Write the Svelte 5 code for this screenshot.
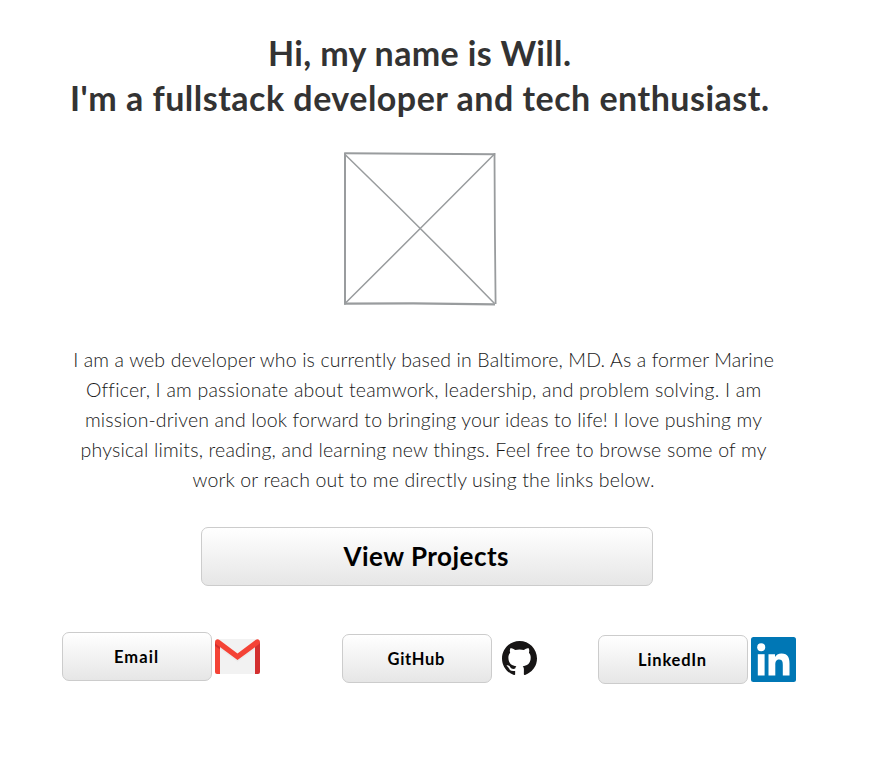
<script>
  const headline = [
    { text: 'Hi, my name is Will.', width: 303 },
    { text: "I'm a fullstack developer and tech enthusiast.", width: 699 }
  ];

  const bio = [
    { text: 'I am a web developer who is currently based in Baltimore, MD. As a former Marine', width: 701 },
    { text: 'Officer, I am passionate about teamwork, leadership, and problem solving. I am', width: 674 },
    { text: 'mission-driven and look forward to bringing your ideas to life! I love pushing my', width: 677 },
    { text: 'physical limits, reading, and learning new things. Feel free to browse some of my', width: 686 },
    { text: 'work or reach out to me directly using the links below.', width: 462 }
  ];

  // Tracks a line out or in so that it fills its measure.
  function fit(node, width) {
    node.style.letterSpacing = '0px';
    const natural = node.getBoundingClientRect().width;
    const gaps = node.textContent.length - 1;
    const spacing = (width - natural) / gaps;
    node.style.letterSpacing = `${spacing}px`;
    node.style.marginRight = `${-spacing}px`;
  }
</script>

<main>
  <h1>
    {#each headline as line}
      <span class="line"><span class="text" use:fit={line.width}>{line.text}</span></span>
    {/each}
  </h1>

  <svg class="portrait" width="154" height="154" viewBox="0 0 154 154" fill="none" stroke="#999c9e">
    <path d="M1.200 1.200 76 1.700 152.200 2.200" stroke-width="2" />
    <path d="M2 1V152.500" stroke-width="2" />
    <path d="M151.500 1 151.900 80 152.600 152" stroke-width="1.800" />
    <path d="M1 151.700 70 151.400 152 152.300" stroke-width="2.200" />
    <path d="M2 2.500Q79 77 151.500 151.500" stroke-width="1.500" />
    <path d="M151 2.500Q76 78 2.500 151" stroke-width="1.500" />
  </svg>

  <p class="bio">
    {#each bio as line}
      <span class="line"><span class="text" use:fit={line.width}>{line.text}</span></span>
    {/each}
  </p>

  <button class="projects"><span class="text" use:fit={165}>View Projects</span></button>

  <nav>
    <div class="link email">
      <button><span class="text" use:fit={44}>Email</span></button>
      <svg width="45" height="35" viewBox="0 0 45 35">
        <path fill="#f2f2f2" d="M2 0h41v35H2z" />
        <path fill="#dcdcdc" d="M5 8 22.500 21 40 8v2L22.500 23 5 10z" opacity=".3" />
        <path fill="#d32f2f" d="M40 5l5-2v30q0 2-2 2h-3z" />
        <path fill="#f44336" d="M0 3h5v32H2q-2 0-2-2z" />
        <path fill="#d32f2f" d="M0 3 5 7v3.500L0 7z" />
        <path fill="#f44336" d="M0 3.200C0 .5 2.400-.6 4.500.9L22.500 14.500 40.500.9C42.600-.6 45 .5 45 3.200Q45 4.500 43.500 5.600L22.500 21 1.500 5.600Q0 4.500 0 3.200z" />
      </svg>
    </div>
    <div class="link github">
      <button><span class="text" use:fit={57}>GitHub</span></button>
      <svg width="35" height="34" viewBox="0 0 16 15.600" preserveAspectRatio="none">
        <path fill="#171515" d="M8 0C3.580 0 0 3.580 0 8c0 3.540 2.290 6.530 5.470 7.590.4.070.55-.17.55-.38 0-.19-.01-.82-.01-1.490-2.010.37-2.530-.49-2.690-.94-.09-.23-.48-.94-.82-1.130-.28-.15-.68-.52-.01-.53.63-.01 1.080.58 1.230.82.72 1.210 1.870.87 2.330.66.07-.52.28-.87.51-1.070-1.780-.2-3.640-.89-3.640-3.950 0-.87.31-1.590.82-2.150-.08-.2-.36-1.020.08-2.120 0 0 .67-.21 2.200.82.64-.18 1.320-.27 2-.27s1.360.09 2 .27c1.530-1.040 2.200-.82 2.200-.82.44 1.100.16 1.920.08 2.120.51.56.82 1.270.82 2.150 0 3.070-1.870 3.750-3.650 3.950.29.25.54.73.54 1.480 0 1.070-.01 1.930-.01 2.200 0 .21.15.46.55.38A8.010 8.010 0 0 0 16 8c0-4.420-3.580-8-8-8z" />
      </svg>
    </div>
    <div class="link linkedin">
      <button><span class="text" use:fit={68}>LinkedIn</span></button>
      <svg width="45" height="45" viewBox="0 0 45 45">
        <rect width="45" height="45" rx="2.500" fill="#0077b5" />
        <g fill="#fff">
          <circle cx="10.200" cy="10.300" r="4" />
          <path d="M6.800 17.200h6.800V38.500H6.800z" />
          <path d="M17.500 17.200H24v2.900c1-1.800 3.300-3.500 6.500-3.500 6.700 0 8 4.400 8 10.200v11.700h-6.700V28.100c0-2.500 0-5.700-3.500-5.700s-4 2.700-4 5.500v10.600h-6.800z" />
        </g>
      </svg>
    </div>
  </nav>
</main>

<style>
  :global(body) {
    background: #fff;
  }

  main {
    box-sizing: border-box;
    width: 878px;
    height: 768px;
    padding-top: 30px;
    display: flex;
    flex-direction: column;
    align-items: flex-start;
    font-family: Lato, 'Liberation Sans', sans-serif;
    overflow: hidden;
  }

  .line {
    display: flex;
    justify-content: center;
  }

  .text {
    display: inline-block;
    white-space: nowrap;
  }

  h1 {
    margin: 0;
    width: 839px;
    font-size: 34px;
    font-weight: 700;
    line-height: 45px;
    color: #333;
  }

  .portrait {
    margin: 32px 0 0 343px;
    flex: none;
  }

  .bio {
    margin: 39px 0 0;
    width: 847px;
    font-size: 19.500px;
    font-weight: 300;
    line-height: 30px;
    color: #181818;
  }

  button {
    box-sizing: border-box;
    display: flex;
    align-items: center;
    justify-content: center;
    width: 150px;
    height: 49px;
    padding: 0 2px 0 0;
    border: 1px solid #ccc;
    border-radius: 7px;
    background: linear-gradient(#fff, #e6e6e6);
    color: #000;
    font: 700 16.500px/20px Lato, 'Liberation Sans', sans-serif;
  }

  .projects {
    width: 452px;
    height: 59px;
    margin: 32px 0 0 201px;
    padding-bottom: 2px;
    font-size: 26px;
    line-height: 34px;
  }

  nav {
    display: flex;
    align-items: flex-start;
    margin: 46px 0 0 62px;
  }

  .link {
    display: flex;
    align-items: center;
    gap: 3px;
  }

  .email {
    width: 280px;
  }

  .github {
    width: 256px;
    margin-top: 2px;
    gap: 10px;
  }

  .github svg {
    margin-bottom: 2px;
  }

  .linkedin {
    margin-top: 3px;
  }
</style>
